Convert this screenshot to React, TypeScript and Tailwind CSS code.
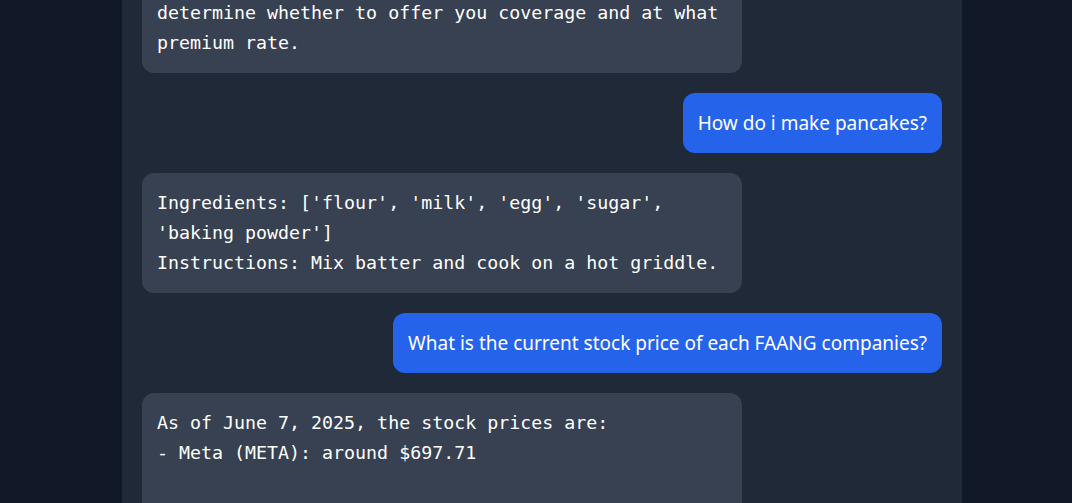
import React from "react";

const mono = { fontFamily: '"DejaVu Sans Mono", "Liberation Mono", monospace' };

function Bot({ text, className = "" }: { text: string; className?: string }) {
  return (
    <div className={"flex justify-start " + className}>
      <div
        className="w-[600px] rounded-xl bg-[#374151] px-[15px] py-[15px] text-[18.3px] leading-[30px] text-white whitespace-pre-wrap"
        style={mono}
      >
        {text}
      </div>
    </div>
  );
}

function User({ text }: { text: string }) {
  return (
    <div className="flex justify-end">
      <div className="rounded-xl bg-[#2563eb] px-[15px] py-[15px] text-[19px] leading-[30px] text-white font-['Noto_Sans',sans-serif]">
        {text}
      </div>
    </div>
  );
}

export default function App() {
  return (
    <div className="h-[503px] overflow-hidden bg-[#111827] pl-[12px]">
      <div className="mx-auto h-full w-[840px] bg-[#1f2937] px-[20px]">
        <div className="flex flex-col gap-[20px]">
          <Bot
            className="-mt-[47px]"
            text={"review your medical history and other factors to\ndetermine whether to offer you coverage and at what\npremium rate."}
          />
          <User text="How do i make pancakes?" />
          <Bot
            text={"Ingredients: ['flour', 'milk', 'egg', 'sugar', 'baking powder']\nInstructions: Mix batter and cook on a hot griddle."}
          />
          <User text="What is the current stock price of each FAANG companies?" />
          <Bot
            text={"As of June 7, 2025, the stock prices are:\n- Meta (META): around $697.71\n\n- Apple (AAPL): around $203.92\n- Amazon (AMZN): around $213.57"}
          />
        </div>
      </div>
    </div>
  );
}
